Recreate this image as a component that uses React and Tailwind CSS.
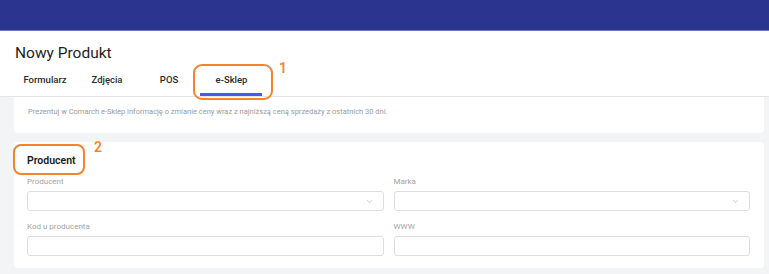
import { ChevronDown } from 'lucide-react'

function Field({ label, select }) {
  return (
    <div className="flex flex-col">
      <span className="h-[10px] text-[8px] leading-[10px] text-[#a3a3a3]">{label}</span>
      <div className="mt-[4px] flex h-[20px] items-center justify-end rounded-[3px] border border-[#dedede] bg-white pr-[9px]">
        {select && <ChevronDown className="h-[9px] w-[9px] text-[#a8a8a8]" strokeWidth={1.5} />}
      </div>
    </div>
  )
}

export default function App() {
  const tabs = ['Formularz', 'Zdjęcia', 'POS', 'e-Sklep']
  return (
    <div
      className="relative h-[274px] w-[769px] overflow-hidden bg-[#f3f4f6]"
      style={{ fontFamily: 'Roboto, "Noto Sans", sans-serif' }}
    >
      <div className="h-[31px] border-b border-[#6b74c0] bg-[#2b3590]" />

      <div className="border-b border-[#e4e4e4] bg-white pl-[14px]">
        <h1 className="pt-[12px] pl-[1px] text-[15.5px] leading-[20px] font-normal text-[#1f1f1f]">
          Nowy Produkt
        </h1>
        <div className="mt-[3px] flex">
          {tabs.map((t) => (
            <div
              key={t}
              className={`flex h-[30px] w-[62px] items-center justify-center pt-[1px] text-[9.5px] font-medium text-[#2b2b2b] ${
                t === 'e-Sklep' ? 'border-b-[3px] border-[#4b5ae3] pl-[1px]' : 'border-b-[3px] border-transparent'
              }`}
            >
              {t}
            </div>
          ))}
        </div>
      </div>

      <div className="pr-[5px] pl-[14px]">
        <div className="h-[36px] rounded-b-[4px] bg-white px-[14px] pt-[10px] text-[7.5px] leading-[10px] text-[#9b9b9b]">
          Prezentuj w Comarch e-Sklep informację o zmianie ceny wraz z najniższą ceną sprzedaży z ostatnich 30 dni.
        </div>

        <div className="mt-[9px] rounded-[4px] bg-white px-[13px] pt-[12px] pb-[12px] pr-[14px]">
          <h2 className="text-[10.5px] leading-[14px] font-semibold text-[#1a1a1a]">Producent</h2>
          <div className="mt-[9px] grid grid-cols-2 gap-x-[10px] gap-y-[11px]">
            <Field label="Producent" select />
            <Field label="Marka" select />
            <Field label="Kod u producenta" />
            <Field label="WWW" />
          </div>
        </div>
      </div>

      <div className="absolute top-[64px] left-[193px] h-[36px] w-[80px] rounded-[9px] border-2 border-[#f5832a]" />
      <span className="absolute top-[60px] left-[279px] text-[14px] leading-[16px] font-semibold text-[#f5832a]">1</span>
      <div className="absolute top-[144px] left-[13px] h-[31px] w-[72px] rounded-[8px] border-2 border-[#f5832a]" />
      <span className="absolute top-[139px] left-[94px] text-[14px] leading-[16px] font-semibold text-[#f5832a]">2</span>
    </div>
  )
}
